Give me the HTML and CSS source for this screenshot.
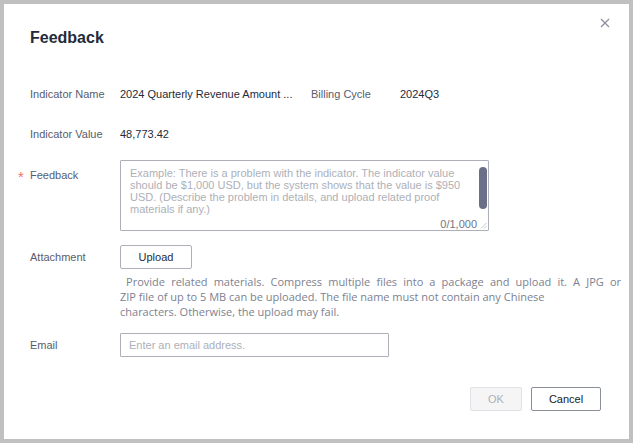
FILE: index.html
```html
<!DOCTYPE html>
<html lang="en">
<head>
<meta charset="utf-8">
<title>Feedback</title>
<link rel="stylesheet" href="styles.css">
</head>
<body>
<div class="dialog">
  <div class="dialog-header">
    <h2 class="title">Feedback</h2>
    <button class="close" aria-label="Close">
      <svg width="10" height="10" viewBox="0 0 10 10"><path d="M1 1L9 9M9 1L1 9" stroke="#8a8e99" stroke-width="1.2" fill="none"/></svg>
    </button>
  </div>
  <div class="dialog-body">
    <div class="info-grid">
      <div class="label">Indicator Name</div>
      <div class="value">2024 Quarterly Revenue Amount ...</div>
      <div class="label">Billing Cycle</div>
      <div class="value">2024Q3</div>
      <div class="label">Indicator Value</div>
      <div class="value">48,773.42</div>
    </div>

    <div class="form-row">
      <div class="label required">Feedback</div>
      <div class="field textarea-field">
        <textarea class="textarea" placeholder="Example: There is a problem with the indicator. The indicator value should be $1,000 USD, but the system shows that the value is $950 USD. (Describe the problem in details, and upload related proof materials if any.)"></textarea>
        <span class="scroll-thumb"></span>
        <span class="counter">0/1,000</span>
        <svg class="grip" width="7" height="7" viewBox="0 0 7 7"><path d="M6.5 1L1 6.5M6.5 4L4 6.5" stroke="#b8bac2" stroke-width="0.8" fill="none"/></svg>
      </div>
    </div>

    <div class="form-row">
      <div class="label">Attachment</div>
      <div class="field">
        <button class="btn upload">Upload</button>
        <div class="hint">
          <span class="hint-first">&nbsp;Provide related materials. Compress multiple files into a package and upload it. A JPG or</span>
          <span class="hint-rest">ZIP file of up to 5 MB can be uploaded. The file name must not contain any Chinese<br>characters. Otherwise, the upload may fail.</span>
        </div>
      </div>
    </div>

    <div class="form-row">
      <div class="label">Email</div>
      <div class="field">
        <input class="input" type="text" placeholder="Enter an email address.">
      </div>
    </div>
  </div>
  <div class="dialog-footer">
    <button class="btn ok" disabled>OK</button>
    <button class="btn cancel">Cancel</button>
  </div>
</div>
</body>
</html>
```

FILE: styles.css
```css
html, body {
  margin: 0;
  padding: 0;
}
body {
  background: #c0c0c0;
  font-family: "Liberation Sans", Arial, sans-serif;
  font-size: 11px;
  color: #252b3a;
  width: 633px;
  height: 443px;
  overflow: hidden;
}
.dialog {
  position: relative;
  box-sizing: border-box;
  width: 625px;
  height: 435px;
  margin: 4px;
  background: #ffffff;
  padding: 0 28px 0 26px;
}
.title {
  margin: 0;
  padding-top: 22px;
  font-size: 16px;
  line-height: 24px;
  font-weight: 700;
  color: #252b3a;
}
.close {
  position: absolute;
  top: 14px;
  right: 19px;
  width: 10px;
  height: 10px;
  padding: 0;
  border: 0;
  background: none;
  display: block;
}
.close svg { display: block; }

.info-grid {
  margin-top: 32px;
  display: grid;
  grid-template-columns: 90px 191px 89px auto;
  row-gap: 16px;
}
.label {
  color: #575d6c;
  line-height: 24px;
  white-space: nowrap;
}
.value {
  color: #252b3a;
  line-height: 24px;
  white-space: nowrap;
}

.form-row {
  display: grid;
  grid-template-columns: 90px 1fr;
  margin-top: 14px;
}
.label.required {
  position: relative;
  margin-top: 3px;
}
.label.required::before {
  content: "*";
  position: absolute;
  left: -12px;
  top: 2px;
  color: #f66f6a;
  font-size: 15px;
}

.field {
  position: relative;
}
.textarea-field {
  width: 369px;
  height: 71px;
}
.textarea {
  display: block;
  box-sizing: border-box;
  width: 369px;
  height: 71px;
  margin: 0;
  border: 1px solid #adb0b8;
  border-radius: 1px;
  padding: 6px 18px 6px 9px;
  font-family: "Liberation Sans", Arial, sans-serif;
  font-size: 11px;
  line-height: 12px;
  color: #252b3a;
  resize: none;
  overflow: hidden;
  outline: none;
}
.textarea::placeholder,
.input::placeholder {
  color: #adb0b8;
  opacity: 1;
}
.scroll-thumb {
  position: absolute;
  top: 7px;
  right: 2px;
  width: 8px;
  height: 42px;
  border-radius: 4px;
  background: #6b6f87;
}
.counter {
  position: absolute;
  right: 12px;
  bottom: 1px;
  line-height: 12px;
  color: #71757f;
}
.grip {
  position: absolute;
  right: 2px;
  bottom: 2px;
}

.btn {
  box-sizing: border-box;
  height: 24px;
  padding: 0;
  margin: 0;
  background: #ffffff;
  border: 1px solid #adb0b8;
  border-radius: 2px;
  font-family: "Liberation Sans", Arial, sans-serif;
  font-size: 11px;
  color: #252b3a;
  cursor: pointer;
}
.upload {
  display: block;
  width: 72px;
}
.hint {
  width: 501px;
  margin: 5px 0 0;
  font-family: "Open Sans", "Noto Sans", sans-serif;
  font-size: 11px;
  line-height: 15px;
  color: #7d8190;
}
.hint-first {
  display: block;
  white-space: nowrap;
  text-align: justify;
  text-align-last: justify;
}
.hint-rest {
  display: block;
  white-space: nowrap;
}
.input {
  display: block;
  box-sizing: border-box;
  width: 269px;
  height: 24px;
  margin: 0;
  border: 1px solid #adb0b8;
  border-radius: 1px;
  padding: 0 8px;
  font-family: "Liberation Sans", Arial, sans-serif;
  font-size: 11px;
  color: #252b3a;
  outline: none;
}

.dialog-footer {
  display: flex;
  justify-content: flex-end;
  gap: 9px;
  margin-top: 30px;
}
.ok {
  width: 52px;
  background: #f5f5f6;
  border-color: #dfe1e6;
  color: #adb0b8;
  cursor: default;
}
.cancel {
  width: 70px;
  border-color: #8a8e99;
  color: #191919;
}
```
